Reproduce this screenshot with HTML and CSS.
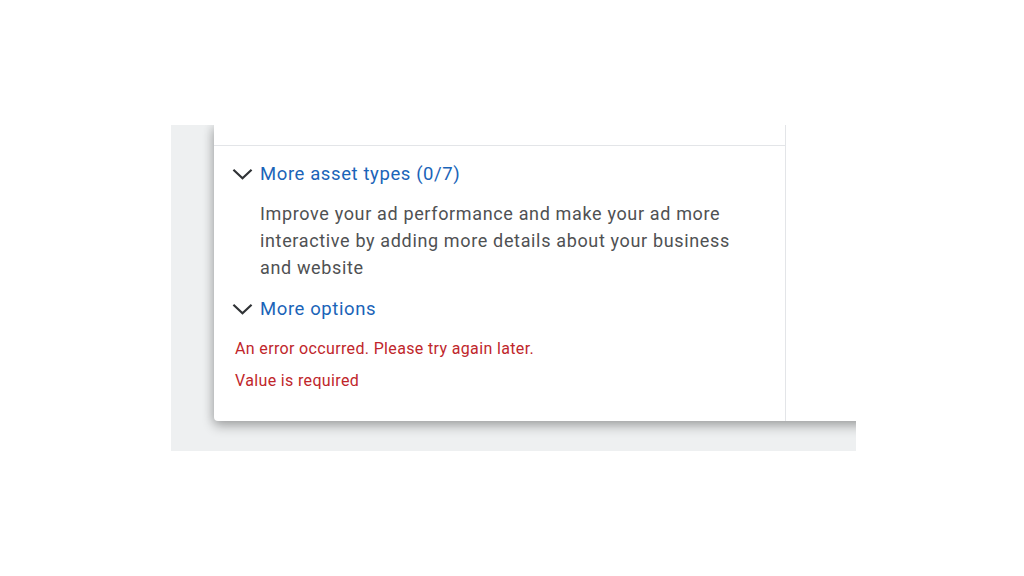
FILE: index.html
```html
<!DOCTYPE html>
<html lang="en">
<head>
    <meta charset="UTF-8">
    <meta name="viewport" content="width=device-width, initial-scale=1.0">
    <title>Ad assets</title>
    <link rel="stylesheet" href="styles.css">
</head>
<body>
    <div id="stage">
        <div id="card">
            <div id="main">
                <div id="stub"></div>
                <div class="section">
                    <button class="toggle">
                        <svg class="chevron" viewBox="0 0 22 12" fill="none" stroke="#303336" stroke-width="2.3">
                            <polyline points="1.5,1.5 11,10.5 20.5,1.5"></polyline>
                        </svg>
                        <span>More asset types (0/7)</span>
                    </button>
                    <p class="desc">Improve your ad performance and make your ad more interactive by adding more details about your business and website</p>
                    <button class="toggle">
                        <svg class="chevron" viewBox="0 0 22 12" fill="none" stroke="#303336" stroke-width="2.3">
                            <polyline points="1.5,1.5 11,10.5 20.5,1.5"></polyline>
                        </svg>
                        <span>More options</span>
                    </button>
                    <p class="error first">An error occurred. Please try again later.</p>
                    <p class="error">Value is required</p>
                </div>
            </div>
            <div id="side"></div>
        </div>
    </div>
</body>
</html>
```

FILE: styles.css
```css
:root {
    --panel: #eef0f1;
    --line: #e3e5e8;
    --blue: #1b64b8;
    --text: #4f5153;
    --red: #c0262b;
}
* {
    margin: 0;
    padding: 0;
    box-sizing: border-box;
}
body {
    background-color: #fff;
    font-family: 'Roboto', 'Liberation Sans', sans-serif;
}
#stage {
    width: 685px;
    height: 326px;
    margin: 125px 0 0 171px;
    padding-left: 43px;
    background-color: var(--panel);
    overflow: hidden;
}
#card {
    display: flex;
    width: 700px;
    height: 296px;
    background-color: #fff;
    box-shadow: 0 5px 12px rgba(0, 0, 0, 0.3), -3px 0 8px rgba(0, 0, 0, 0.08);
    border-bottom-left-radius: 4px;
}
#main {
    width: 572px;
    border-right: 1px solid var(--line);
}
#stub {
    height: 21px;
    border-bottom: 1px solid var(--line);
}
.section {
    padding: 14px 0 0 18px;
}
.toggle {
    display: flex;
    align-items: center;
    gap: 7px;
    border: none;
    background: none;
    font-family: inherit;
    font-size: 18.5px;
    letter-spacing: 0.6px;
    color: var(--blue);
    line-height: 28px;
    cursor: pointer;
}
.chevron {
    width: 21px;
    height: 12px;
}
.desc {
    margin: 12px 0 14px 28px;
    width: 500px;
    font-size: 18px;
    letter-spacing: 0.65px;
    line-height: 27px;
    color: var(--text);
}
.error {
    margin-top: 10px;
    padding-left: 3px;
    font-size: 16px;
    letter-spacing: 0.35px;
    line-height: 22px;
    color: var(--red);
}
.error.first {
    margin-top: 15px;
}
#side {
    flex: 1;
}
```
